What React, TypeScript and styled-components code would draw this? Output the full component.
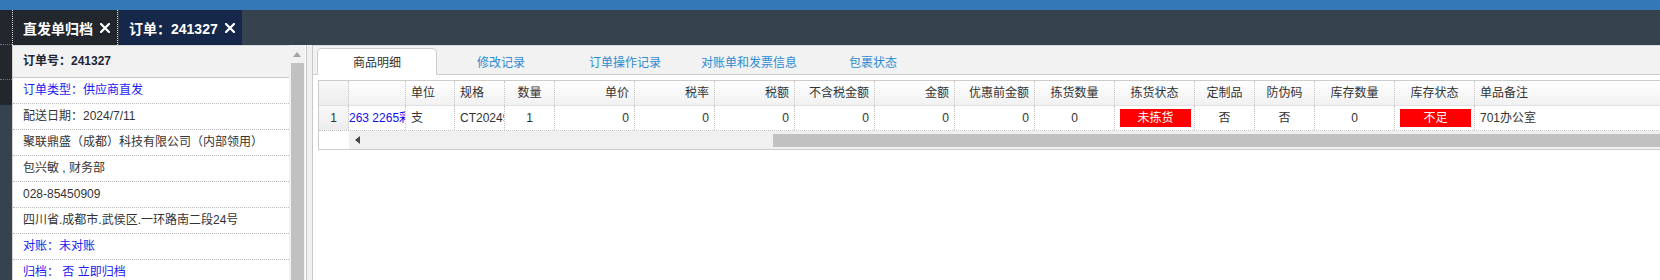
import React from 'react';
import styled, { createGlobalStyle } from 'styled-components';

const GlobalStyle = createGlobalStyle`
  html, body {
    margin: 0;
    padding: 0;
  }
  body {
    font-family: "Liberation Sans", Arial, "Noto Sans CJK SC", sans-serif;
    font-size: 12px;
    color: #333;
    background: #fff;
    overflow: hidden;
  }
`;

const Page = styled.div`
  width: 1660px;
  height: 280px;
  display: flex;
  flex-direction: column;
  overflow: hidden;
`;

const TopBar = styled.div`
  height: 10px;
  flex-shrink: 0;
  background: #3479b6;
`;

const Frame = styled.div`
  flex: 1;
  min-height: 0;
  display: flex;
  background: #36434f;
`;

const SideMenu = styled.div`
  width: 12px;
  flex-shrink: 0;
`;

const SideItem = styled.div<{ $h: number; $last?: boolean }>`
  height: ${p => p.$h}px;
  background: #22272e;
  border-bottom: ${p => (p.$last ? 'none' : '1px dotted #6d7682')};
`;

const Workspace = styled.div`
  flex: 1;
  min-width: 0;
  display: flex;
  flex-direction: column;
`;

const TabBar = styled.div`
  height: 35px;
  flex-shrink: 0;
  display: flex;
`;

const PageTab = styled.div<{ $width: number; $active?: boolean }>`
  box-sizing: border-box;
  width: ${p => p.$width}px;
  height: 35px;
  display: flex;
  align-items: center;
  justify-content: space-between;
  padding: 0 7px 0 10px;
  color: #fff;
  font-size: 14px;
  font-weight: bold;
  background: ${p => (p.$active ? '#152849' : '#22262d')};
  border-left: ${p => (p.$active ? 'none' : '1px dotted #d8d8d8')};
  border-right: ${p => (p.$active ? 'none' : '1px dotted #d8d8d8')};
  margin-right: ${p => (p.$active ? 0 : 1)}px;
`;

const CloseIcon = () => (
  <svg width="10" height="10" viewBox="0 0 10 10">
    <path d="M1 1L9 9M9 1L1 9" stroke="#fff" strokeWidth="2.2" strokeLinecap="square" />
  </svg>
);

const Body = styled.div`
  flex: 1;
  min-height: 0;
  display: flex;
  background: #fff;
  overflow: hidden;
`;

const LeftPanel = styled.div`
  width: 293px;
  flex-shrink: 0;
  display: flex;
`;

const InfoList = styled.div`
  box-sizing: border-box;
  width: 277px;
  border-left: 1px solid #d4d4d4;
  border-top: 1px solid #dcdcdc;
  overflow: hidden;
`;

const InfoHeader = styled.div`
  height: 31px;
  line-height: 31px;
  padding-left: 10px;
  background: #f2f2f2;
  border-bottom: 1px solid #c8c8c8;
  font-weight: bold;
  color: #1d2536;
`;

const InfoRow = styled.div<{ $blue?: boolean }>`
  height: 25px;
  line-height: 25px;
  padding-left: 10px;
  white-space: nowrap;
  border-bottom: 1px dotted #b8b8b8;
  color: ${p => (p.$blue ? '#1a1af5' : '#333')};
`;

const VScroll = styled.div`
  width: 16px;
  display: flex;
  flex-direction: column;
  background: #f1f1f1;
`;

const ScrollButton = styled.div`
  height: 18px;
  flex-shrink: 0;
  display: flex;
  align-items: center;
  justify-content: center;
`;

const VThumb = styled.div`
  flex: 1;
  margin: 0 1px 0 2px;
  background: #c1c1c1;
`;

const Splitter = styled.div`
  box-sizing: border-box;
  width: 7px;
  flex-shrink: 0;
  margin-left: 1px;
  background: #f0f0f0;
  border-left: 1px solid #c9c9c9;
  border-right: 1px solid #c9c9c9;
`;

const RightPanel = styled.div`
  flex: 1;
  min-width: 0;
  display: flex;
  flex-direction: column;
`;

const TabStrip = styled.div`
  height: 28px;
  flex-shrink: 0;
  display: flex;
  align-items: flex-end;
  gap: 4px;
  padding-left: 4px;
  background: #f2f2f2;
  border-top: 1px solid #dcdcdc;
  border-bottom: 1px solid #cccccc;
`;

const DetailTab = styled.div<{ $active?: boolean }>`
  box-sizing: border-box;
  width: 120px;
  height: 27px;
  margin-bottom: -1px;
  display: flex;
  align-items: center;
  justify-content: center;
  color: ${p => (p.$active ? '#333' : '#2a8bd2')};
  background: ${p => (p.$active ? '#fff' : 'transparent')};
  border: 1px solid ${p => (p.$active ? '#cccccc' : 'transparent')};
  border-bottom-color: ${p => (p.$active ? '#fff' : 'transparent')};
  border-radius: 5px 5px 0 0;
`;

const TableArea = styled.div`
  padding: 5px 0 0 5px;
`;

const Grid = styled.div`
  border: 1px solid #cccccc;
  border-right: none;
  width: 1600px;
`;

const COLS = '30px 57px 49px 50px 50px 80px 80px 80px 80px 80px 80px 80px 80px 60px 60px 80px 80px 260px';

const HeadRow = styled.div`
  display: grid;
  grid-template-columns: ${COLS};
  height: 24px;
  border-bottom: 1px solid #e2e2e2;
  background: linear-gradient(#ffffff, #f1f1f1);
`;

const DataRow = styled.div`
  display: grid;
  grid-template-columns: ${COLS};
  height: 24px;
  border-bottom: 1px dotted #c4c4c4;
`;

type Align = 'left' | 'center' | 'right';

const Cell = styled.div<{ $align: Align; $rn?: boolean; $tight?: boolean; $blue?: boolean }>`
  box-sizing: border-box;
  height: 24px;
  line-height: 24px;
  overflow: hidden;
  white-space: nowrap;
  padding: ${p => (p.$tight ? '0' : '0 5px 0 5px')};
  text-align: ${p => p.$align};
  color: ${p => (p.$blue ? '#1010f0' : '#333')};
  border-right: 1px dotted #c4c4c4;
  background: ${p => (p.$rn ? 'linear-gradient(#f9f9f9, #ececec)' : 'transparent')};
`;

const Badge = styled.div`
  height: 18px;
  line-height: 18px;
  margin: 3px 0 0 0;
  background: #ff0000;
  color: #fff;
  text-align: center;
`;

const BadgeCell = styled.div`
  box-sizing: border-box;
  height: 24px;
  padding: 0 3px 0 5px;
  border-right: 1px dotted #c4c4c4;
`;

const HScrollRow = styled.div`
  display: flex;
  height: 18px;
`;

const HScrollGap = styled.div`
  width: 30px;
  flex-shrink: 0;
`;

const HTrack = styled.div`
  flex: 1;
  display: flex;
  align-items: center;
  background: #f0f0f0;
`;

const HArrow = styled.div`
  width: 16px;
  height: 18px;
  flex-shrink: 0;
  display: flex;
  align-items: center;
  justify-content: center;
`;

const HThumb = styled.div`
  height: 13px;
  margin-left: 408px;
  flex: 1;
  background: #c1c1c1;
`;

const headers: { text: string; align: Align }[] = [
  { text: '', align: 'center' },
  { text: '', align: 'left' },
  { text: '单位', align: 'left' },
  { text: '规格', align: 'left' },
  { text: '数量', align: 'center' },
  { text: '单价', align: 'right' },
  { text: '税率', align: 'right' },
  { text: '税额', align: 'right' },
  { text: '不含税金额', align: 'right' },
  { text: '金额', align: 'right' },
  { text: '优惠前金额', align: 'right' },
  { text: '拣货数量', align: 'center' },
  { text: '拣货状态', align: 'center' },
  { text: '定制品', align: 'center' },
  { text: '防伪码', align: 'center' },
  { text: '库存数量', align: 'center' },
  { text: '库存状态', align: 'center' },
  { text: '单品备注', align: 'left' },
];

const infoRows: { text: string; blue?: boolean }[] = [
  { text: '订单类型：供应商直发', blue: true },
  { text: '配送日期：2024/7/11' },
  { text: '聚联鼎盛（成都）科技有限公司（内部领用）' },
  { text: '包兴敏 , 财务部' },
  { text: '028-85450909' },
  { text: '四川省.成都市.武侯区.一环路南二段24号' },
  { text: '对账：未对账', blue: true },
  { text: '归档：  否 立即归档', blue: true },
];

const detailTabs = ['商品明细', '修改记录', '订单操作记录', '对账单和发票信息', '包裹状态'];

const App = () => (
  <Page>
    <GlobalStyle />
    <TopBar />
    <Frame>
      <SideMenu>
        <SideItem $h={34} />
        <SideItem $h={34} />
        <SideItem $h={25} $last />
      </SideMenu>
      <Workspace>
        <TabBar>
          <PageTab $width={106}>
            直发单归档
            <CloseIcon />
          </PageTab>
          <PageTab $width={123} $active>
            订单：241327
            <CloseIcon />
          </PageTab>
        </TabBar>
        <Body>
          <LeftPanel>
            <InfoList>
              <InfoHeader>订单号：241327</InfoHeader>
              {infoRows.map((row, i) => (
                <InfoRow key={i} $blue={row.blue}>
                  {row.text}
                </InfoRow>
              ))}
            </InfoList>
            <VScroll>
              <ScrollButton>
                <svg width="8" height="5" viewBox="0 0 8 5">
                  <path d="M0 5L4 0L8 5Z" fill="#a3a3a3" />
                </svg>
              </ScrollButton>
              <VThumb />
            </VScroll>
          </LeftPanel>
          <Splitter />
          <RightPanel>
            <TabStrip>
              {detailTabs.map((t, i) => (
                <DetailTab key={t} $active={i === 0}>
                  {t}
                </DetailTab>
              ))}
            </TabStrip>
            <TableArea>
              <Grid>
                <HeadRow>
                  {headers.map((h, i) => (
                    <Cell key={i} $align={h.align} $rn={i === 0}>
                      {h.text}
                    </Cell>
                  ))}
                </HeadRow>
                <DataRow>
                  <Cell $align="center" $rn>1</Cell>
                  <Cell $align="left" $tight $blue>263 2265彩色中性笔</Cell>
                  <Cell $align="left">支</Cell>
                  <Cell $align="left">CT20249856</Cell>
                  <Cell $align="center">1</Cell>
                  <Cell $align="right">0</Cell>
                  <Cell $align="right">0</Cell>
                  <Cell $align="right">0</Cell>
                  <Cell $align="right">0</Cell>
                  <Cell $align="right">0</Cell>
                  <Cell $align="right">0</Cell>
                  <Cell $align="center">0</Cell>
                  <BadgeCell>
                    <Badge>未拣货</Badge>
                  </BadgeCell>
                  <Cell $align="center">否</Cell>
                  <Cell $align="center">否</Cell>
                  <Cell $align="center">0</Cell>
                  <BadgeCell>
                    <Badge>不足</Badge>
                  </BadgeCell>
                  <Cell $align="left">701办公室</Cell>
                </DataRow>
                <HScrollRow>
                  <HScrollGap />
                  <HTrack>
                    <HArrow>
                      <svg width="5" height="8" viewBox="0 0 5 8">
                        <path d="M5 0L0 4L5 8Z" fill="#444" />
                      </svg>
                    </HArrow>
                    <HThumb />
                  </HTrack>
                </HScrollRow>
              </Grid>
            </TableArea>
          </RightPanel>
        </Body>
      </Workspace>
    </Frame>
  </Page>
);

export default App;
